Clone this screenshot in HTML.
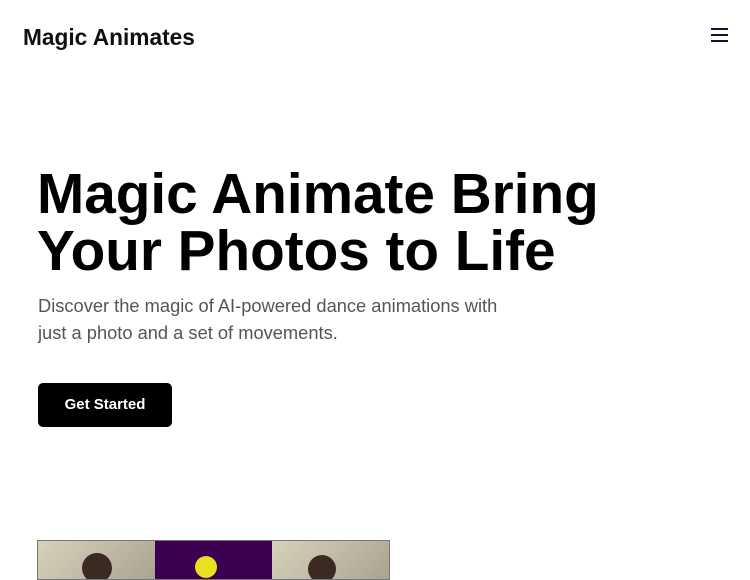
<!DOCTYPE html>
<html><head><style>
*{margin:0;padding:0;box-sizing:border-box}
body{width:750px;height:563px;overflow:hidden;background:#fff;font-family:"Liberation Sans",sans-serif;position:relative}
.logo{position:absolute;left:23px;top:24px;font-size:22.7px;font-weight:bold;color:#111}
.ham{position:absolute;left:711px;top:28px;width:17px}
.ham i{display:block;height:2px;background:#1a1033;margin-bottom:4px}
h1{position:absolute;left:37px;top:166px;font-size:56.7px;line-height:57px;font-weight:bold;color:#000}
p{position:absolute;left:38px;top:292px;font-size:18.3px;line-height:27px;color:#555;width:490px}
.btn{position:absolute;left:38px;top:383px;width:134px;height:44px;background:#000;border-radius:5px;color:#fff;font-weight:bold;font-size:15px;text-align:center;line-height:44px}
.strip{position:absolute;left:37px;top:540px;width:353px;height:40px;border:1px solid #777;display:flex;overflow:hidden}
.strip div{flex:1}
</style></head><body>
<div class="logo">Magic Animates</div>
<div class="ham"><i></i><i></i><i></i></div>
<h1>Magic Animate Bring<br>Your Photos to Life</h1>
<p>Discover the magic of AI-powered dance animations with just a photo and a set of movements.</p>
<div class="btn">Get Started</div>
<div class="strip">
<div style="background:linear-gradient(135deg,#d8d2bc,#aaa391);position:relative"><span style="position:absolute;left:44px;top:12px;width:30px;height:30px;border-radius:50%;background:#3a2a22"></span></div>
<div style="background:#3d0050;position:relative"><span style="position:absolute;left:40px;top:15px;width:22px;height:22px;border-radius:50%;background:#e8e020"></span></div>
<div style="background:linear-gradient(135deg,#d8d2bc,#aaa391);position:relative"><span style="position:absolute;left:36px;top:14px;width:28px;height:28px;border-radius:50%;background:#3a2a22"></span></div>
</div>
</body></html>
